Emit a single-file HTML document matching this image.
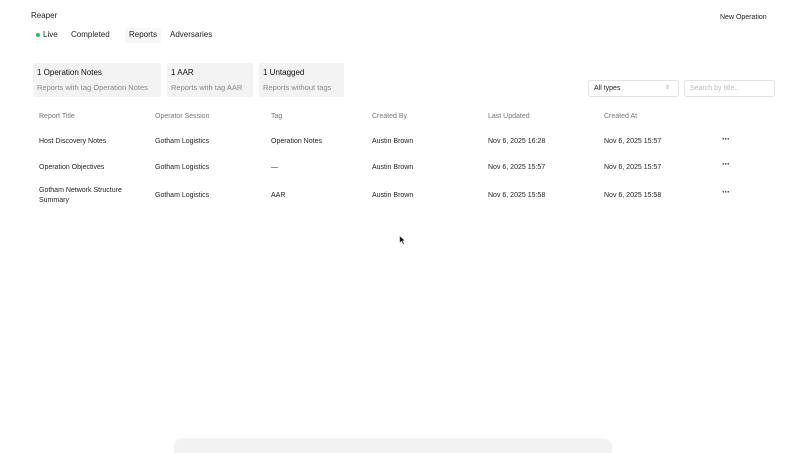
<!DOCTYPE html>
<html><head><style>
*{margin:0;padding:0;box-sizing:border-box}
body{width:800px;height:449px;background:#fff;font-family:"Liberation Sans",sans-serif;color:#222;position:relative;overflow:hidden}
.a{position:absolute;white-space:nowrap}
.s{font-size:8px}
.card{position:absolute;top:63px;height:34px;background:#f3f3f3;border-radius:2px}
.card b{position:absolute;left:4px;top:5px;font-size:8px;font-weight:normal;color:#111}
.card i{position:absolute;left:4px;top:20px;font-size:7.5px;font-style:normal;color:#888}
.h{color:#777;font-size:7px}
.r{font-size:7px;color:#222}
.d{font-size:9px;font-weight:bold;letter-spacing:-0.5px}
</style></head><body>
<div class="a" style="left:31px;top:11px;font-size:8px">Reaper</div>
<div class="a" style="left:36px;top:33px;width:4px;height:4px;border-radius:50%;background:#22c55e"></div>
<div class="a s" style="left:43px;top:30px">Live</div>
<div class="a s" style="left:71px;top:30px">Completed</div>
<div class="a" style="left:125px;top:28px;width:36px;height:15px;background:#f7f7f7;border-radius:2px"></div>
<div class="a s" style="left:129px;top:30px">Reports</div>
<div class="a s" style="left:170px;top:30px">Adversaries</div>
<div class="a" style="left:720px;top:14px;font-size:7px">New Operation</div>
<div class="card" style="left:33px;width:128px"><b>1 Operation Notes</b><i>Reports with tag Operation Notes</i></div>
<div class="card" style="left:167px;width:86px"><b>1 AAR</b><i>Reports with tag AAR</i></div>
<div class="card" style="left:259px;width:85px"><b>1 Untagged</b><i>Reports without tags</i></div>
<div class="a" style="left:588px;top:80px;width:91px;height:17px;border:1px solid #e3e3e3;border-radius:3px;font-size:7px;padding:4px 5px">All types<span style="position:absolute;right:8px;top:3px;color:#aaa;font-size:6px">⇕</span></div>
<div class="a" style="left:684px;top:80px;width:91px;height:17px;border:1px solid #e3e3e3;border-radius:3px;font-size:7px;padding:4px 5px;color:#bbb">Search by title...</div>
<div class="a h" style="left:39px;top:113px">Report Title</div>
<div class="a h" style="left:155px;top:113px">Operator Session</div>
<div class="a h" style="left:271px;top:113px">Tag</div>
<div class="a h" style="left:372px;top:113px">Created By</div>
<div class="a h" style="left:488px;top:113px">Last Updated</div>
<div class="a h" style="left:604px;top:113px">Created At</div>

<div class="a r" style="left:39px;top:138px">Host Discovery Notes</div>
<div class="a r" style="left:155px;top:138px">Gotham Logistics</div>
<div class="a r" style="left:271px;top:138px">Operation Notes</div>
<div class="a r" style="left:372px;top:138px">Austin Brown</div>
<div class="a r" style="left:488px;top:138px">Nov 6, 2025 16:28</div>
<div class="a r" style="left:604px;top:138px">Nov 6, 2025 15:57</div>
<div class="a d" style="left:722px;top:134px">···</div>

<div class="a r" style="left:39px;top:164px">Operation Objectives</div>
<div class="a r" style="left:155px;top:164px">Gotham Logistics</div>
<div class="a r" style="left:271px;top:164px">—</div>
<div class="a r" style="left:372px;top:164px">Austin Brown</div>
<div class="a r" style="left:488px;top:164px">Nov 6, 2025 15:57</div>
<div class="a r" style="left:604px;top:164px">Nov 6, 2025 15:57</div>
<div class="a d" style="left:722px;top:159px">···</div>

<div class="a r" style="left:39px;top:186px;line-height:10px">Gotham Network Structure<br>Summary</div>
<div class="a r" style="left:155px;top:192px">Gotham Logistics</div>
<div class="a r" style="left:271px;top:192px">AAR</div>
<div class="a r" style="left:372px;top:192px">Austin Brown</div>
<div class="a r" style="left:488px;top:192px">Nov 6, 2025 15:58</div>
<div class="a r" style="left:604px;top:192px">Nov 6, 2025 15:58</div>
<div class="a d" style="left:722px;top:187px">···</div>

<svg class="a" style="left:399px;top:235px" width="7" height="10" viewBox="0 0 7 10"><path d="M0.5 0.5V8L2.5 6.3L4 9.5L5.2 9L3.8 5.8H6.3Z" fill="#111" stroke="#fff" stroke-width="0.6"/></svg>
<div class="a" style="left:174px;top:439px;width:438px;height:14px;background:#f2f2f2;border-radius:8px 8px 0 0;box-shadow:0 -1px 2px rgba(0,0,0,0.03)"></div>
</body></html>
